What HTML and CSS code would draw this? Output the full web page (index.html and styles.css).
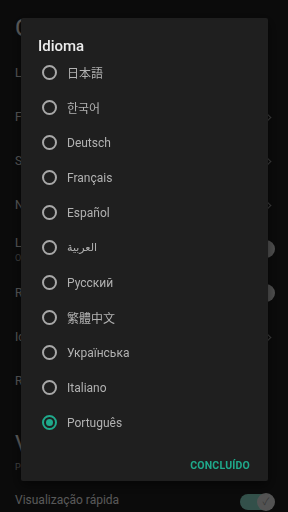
FILE: index.html
```html
<!DOCTYPE html>
<html lang="pt">

<head>
    <meta charset="utf-8">
    <title>Configurações - Idioma</title>
    <link rel="stylesheet" href="styles.css">
</head>

<body>
    <div class="page">
        <div class="page-title">Geral</div>

        <div class="row"><div class="row-label">Layout</div></div>
        <div class="row"><div class="row-label">Fonte</div><span class="chevron"></span></div>
        <div class="row"><div class="row-label">Sincronização</div><span class="chevron"></span></div>
        <div class="row"><div class="row-label">Notificações</div><span class="chevron"></span></div>
        <div class="row">
            <div>
                <div class="row-label">Legendas</div>
                <div class="row-sub">Ocultar automaticamente</div>
            </div>
            <span class="toggle"><span class="thumb"></span></span>
        </div>
        <div class="row"><div class="row-label">Rolagem contínua</div><span class="toggle"><span class="thumb"></span></span></div>
        <div class="row"><div class="row-label">Idioma</div><span class="chevron"></span></div>
        <div class="row"><div class="row-label">Redefinir</div></div>

        <div class="section-head">
            <div class="section-title">Visualização</div>
            <div class="section-sub">Pré-visualização de páginas</div>
        </div>

        <div class="row">
            <div class="row-label">Visualização rápida</div>
            <span class="toggle on"><span class="thumb">&#10003;</span></span>
        </div>
    </div>

    <div class="scrim"></div>

    <div class="dialog">
        <div class="dialog-title">Idioma</div>
        <ul class="options">
            <li class="option"><span class="radio"></span>日本語</li>
            <li class="option"><span class="radio"></span><span class="ko">한국어</span></li>
            <li class="option"><span class="radio"></span>Deutsch</li>
            <li class="option"><span class="radio"></span>Français</li>
            <li class="option"><span class="radio"></span>Español</li>
            <li class="option"><span class="radio"></span><span class="ar">العربية</span></li>
            <li class="option"><span class="radio"></span>Русский</li>
            <li class="option"><span class="radio"></span><span class="tc">繁體中文</span></li>
            <li class="option"><span class="radio"></span>Українська</li>
            <li class="option"><span class="radio"></span>Italiano</li>
            <li class="option selected"><span class="radio"></span>Português</li>
        </ul>
        <div class="dialog-actions">
            <button class="text-button">Concluído</button>
        </div>
    </div>
</body>

</html>
```

FILE: styles.css
```css
body {
    margin: 0;
    width: 288px;
    height: 512px;
    overflow: hidden;
    background: #1c1c1c;
    font-family: Roboto, "Noto Sans CJK JP", "DejaVu Sans", sans-serif;
    color: #e2e2e2;
}

.page {
    padding: 12px 15px 0 15px;
}

.page-title {
    font-size: 24px;
    line-height: 32px;
    height: 39px;
    color: #ececec;
}

.row {
    height: 44px;
    display: flex;
    align-items: center;
    justify-content: space-between;
}

.row-label {
    font-size: 12px;
    color: #dcdcdc;
}

.row-sub {
    font-size: 9px;
    color: #9a9a9a;
    margin-top: 3px;
}

.chevron {
    width: 6px;
    height: 6px;
    border-top: 1.5px solid #9a9a9a;
    border-right: 1.5px solid #9a9a9a;
    transform: rotate(45deg);
    margin-right: 3px;
}

.toggle {
    position: relative;
    width: 33px;
    height: 16px;
    border-radius: 8px;
    background: #4a4a4a;
}

.toggle .thumb {
    position: absolute;
    top: -1px;
    right: -2px;
    width: 18px;
    height: 18px;
    border-radius: 50%;
    background: #c8c8c8;
    font-size: 10px;
    line-height: 18px;
    text-align: center;
    color: #6d6d6d;
}

.toggle.on {
    background: #7fc9b9;
    margin-top: 4px;
}

.toggle.on .thumb {
    background: #d0d0d0;
    color: #8a8a8a;
}

.section-head {
    padding-top: 30px;
    height: 45px;
}

.section-title {
    font-size: 23px;
    line-height: 24px;
    color: #e8e8e8;
}

.section-sub {
    font-size: 9px;
    color: #a8a8a8;
    margin-top: 5px;
}

.scrim {
    position: fixed;
    inset: 0;
    background: rgba(0, 0, 0, 0.6);
}

.dialog {
    position: fixed;
    left: 21px;
    top: 18px;
    width: 247px;
    height: 463px;
    background: #1f1f1f;
    border-radius: 2px;
    box-shadow: 0 4px 12px rgba(0, 0, 0, 0.5);
}

.dialog-title {
    padding: 18px 0 0 17px;
    font-size: 15px;
    line-height: 20px;
    font-weight: 500;
    color: #ececec;
}

.options {
    list-style: none;
    margin: 0;
    padding: 0;
    margin-top: -1px;
}

.option {
    height: 35px;
    display: flex;
    align-items: center;
    padding-left: 21px;
    font-size: 12px;
    color: #b2b2b2;
}

.radio {
    width: 11px;
    height: 11px;
    border: 2px solid #a8a8a8;
    border-radius: 50%;
    margin-right: 10px;
    position: relative;
}

.option.selected .radio {
    border-color: #1fa98b;
}

.option.selected .radio::after {
    content: "";
    position: absolute;
    left: 2px;
    top: 2px;
    width: 7px;
    height: 7px;
    border-radius: 50%;
    background: #1fa98b;
}

.ko {
    font-family: Roboto, "Noto Sans CJK KR", sans-serif;
}

.tc {
    font-family: Roboto, "Noto Sans CJK TC", sans-serif;
}

.ar {
    font-family: "DejaVu Sans", sans-serif;
    font-size: 11px;
}

.dialog-actions {
    display: flex;
    justify-content: flex-end;
    padding: 19px 18px 0 0;
}

.text-button {
    background: none;
    border: none;
    padding: 0;
    font-family: Roboto, sans-serif;
    font-size: 10.5px;
    font-weight: 700;
    letter-spacing: 0.2px;
    text-transform: uppercase;
    color: #1fa98b;
}
```
